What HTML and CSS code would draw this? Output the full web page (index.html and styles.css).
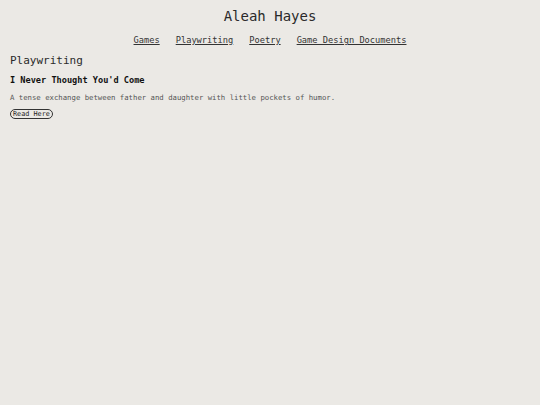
FILE: index.html
```html
<!DOCTYPE html>
<html>
<head>
<meta charset="utf-8">
<link rel="stylesheet" href="styles.css">
</head>
<body>
<header class="site-header">
  <h1 class="site-title">Aleah Hayes</h1>
  <nav class="nav">
    <a href="#">Games</a>
    <a href="#">Playwriting</a>
    <a href="#">Poetry</a>
    <a href="#">Game Design Documents</a>
  </nav>
</header>
<main class="content">
  <h2 class="section-title">Playwriting</h2>
  <article class="work">
    <h3 class="work-title">I Never Thought You'd Come</h3>
    <p class="work-desc">A tense exchange between father and daughter with little pockets of humor.</p>
    <button class="read-btn">Read Here</button>
  </article>
</main>
</body>
</html>
```
FILE: styles.css
```css
html, body {
  margin: 0;
  padding: 0;
  background: #ebe9e5;
}
body {
  font-family: "DejaVu Sans Mono", "Liberation Mono", monospace;
  color: #2a2a2a;
  padding: 0 10px;
}
.site-header {
  text-align: center;
}
.site-title {
  font-size: 14px;
  font-weight: normal;
  margin: 0;
  padding-top: 8px;
  line-height: 17px;
}
.nav {
  display: flex;
  justify-content: center;
  gap: 16px;
  margin-top: 10px;
  font-size: 8.7px;
}
.nav a {
  color: #333;
  text-decoration: underline;
}
.section-title {
  font-size: 11px;
  font-weight: normal;
  margin: 9px 0 0;
  line-height: 14px;
}
.work-title {
  font-size: 8.6px;
  font-weight: bold;
  margin: 6px 0 0;
  color: #111;
  line-height: 12px;
}
.work-desc {
  font-size: 7.3px;
  color: #555;
  margin: 7px 0 0;
  line-height: 10px;
}
.read-btn {
  display: block;
  font-family: inherit;
  font-size: 6.8px;
  color: #222;
  background: transparent;
  border: 1px solid #333;
  border-radius: 6px;
  padding: 0 2px;
  margin-top: 6px;
  line-height: 8px;
}
```
